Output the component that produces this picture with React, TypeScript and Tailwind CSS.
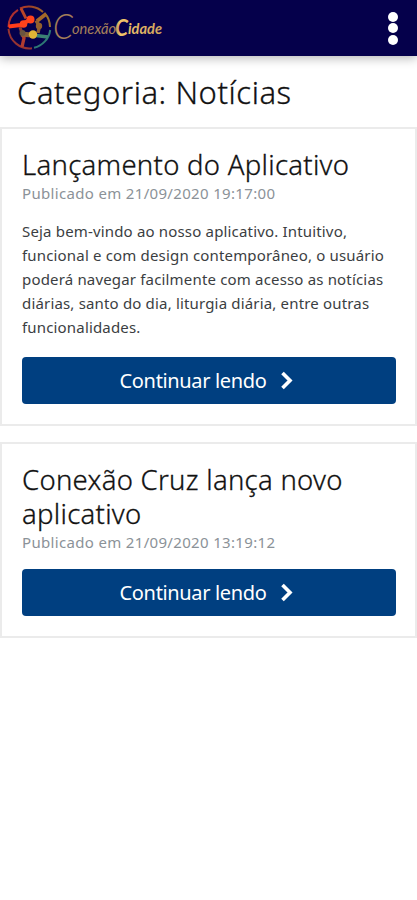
import { useState } from "react";

interface Post {
  id: number;
  title: string;
  publishedAt: string;
  summary?: string[];
}

const posts: Post[] = [
  {
    id: 1,
    title: "Lançamento do Aplicativo",
    publishedAt: "21/09/2020 19:17:00",
    summary: [
      "Seja bem-vindo ao nosso aplicativo. Intuitivo,",
      "funcional e com design contemporâneo, o usuário",
      "poderá navegar facilmente com acesso as notícias",
      "diárias, santo do dia, liturgia diária, entre outras",
      "funcionalidades.",
    ],
  },
  {
    id: 2,
    title: "Conexão Cruz lança novo aplicativo",
    publishedAt: "21/09/2020 13:19:12",
  },
];

function Logo() {
  return (
    <svg width="168" height="56" viewBox="0 0 168 56" fill="none" aria-label="Conexão Cidade">
      <defs>
        <linearGradient id="ring" x1="8" y1="20" x2="51" y2="36" gradientUnits="userSpaceOnUse">
          <stop offset="0" stopColor="#b52b29" />
          <stop offset="0.45" stopColor="#9b4b27" />
          <stop offset="0.8" stopColor="#9a762e" />
          <stop offset="1" stopColor="#2b7873" />
        </linearGradient>
        <linearGradient id="gold" x1="54" y1="0" x2="164" y2="0" gradientUnits="userSpaceOnUse">
          <stop offset="0" stopColor="#a37d58" />
          <stop offset="0.55" stopColor="#a8845a" />
          <stop offset="0.6" stopColor="#f0c56a" />
          <stop offset="1" stopColor="#cfa25c" />
        </linearGradient>
      </defs>

      {/* Wheel */}
      <path d="M8.500 27A21 21 0 0 1 18 9.800" stroke="#ad3030" strokeWidth="2" />
      <path d="M20 8.500A21 21 0 0 1 43 12" stroke="url(#ring)" strokeWidth="2" />
      <path d="M44.500 13A21 21 0 0 1 50 27" stroke="#9a712d" strokeWidth="2" />
      <path d="M50.200 30A21 21 0 0 1 34 47.800" stroke="#2d7875" strokeWidth="2" />
      <path d="M32 48.200A21 21 0 0 1 8.500 29" stroke="#963332" strokeWidth="2" />
      <path d="M21 8.500l5 10" stroke="#b94528" strokeWidth="2.800" />
      <path d="M8.500 26.500l12-1.500 9-5" stroke="#ff3c1a" strokeWidth="4.200" />
      <path d="M46 14l-9 7" stroke="#a66829" strokeWidth="3.800" />
      <path d="M36 20.500l3.500 5.500-1.500 7" stroke="#8f5f30" strokeWidth="3.400" />
      <path d="M48 37l-12-1.500" stroke="#3c8274" strokeWidth="3.400" />
      <path d="M22 47l2-9-2-5" stroke="#b03c30" strokeWidth="3.400" />
      <path d="M21 34l10 1" stroke="#8a6235" strokeWidth="5" />
      <path d="M20 27l1.500 5" stroke="#8c3c32" strokeWidth="3" />
      <circle cx="30.500" cy="19.500" r="4" fill="#ff421c" />
      <circle cx="23.500" cy="24" r="3.800" fill="#ff421c" />
      <circle cx="39" cy="26" r="3.200" fill="#93602d" />
      <circle cx="22.500" cy="33" r="3" fill="#6a5540" />
      <circle cx="33" cy="34.500" r="4.200" fill="#e1b536" />

      {/* Wordmark */}
      <g fill="url(#gold)" fontStyle="italic" fontFamily="Lato, sans-serif">
        <text x="53" y="38.500" fontWeight="300" fontSize="35" textLength="20" lengthAdjust="spacingAndGlyphs">C</text>
        <text x="72" y="34" fontWeight="400" fontSize="15" textLength="44" lengthAdjust="spacingAndGlyphs">onexão</text>
        <text x="115" y="35.500" fontWeight="700" fontSize="22" textLength="13" lengthAdjust="spacingAndGlyphs">C</text>
        <text x="128" y="34" fontWeight="700" fontSize="16" textLength="34" lengthAdjust="spacingAndGlyphs">idade</text>
      </g>
    </svg>
  );
}

function PostCard({ post }: { post: Post }) {
  return (
    <article className="border-2 border-[#ebebeb] bg-white px-5 pt-[19px] pb-5">
      <h2 className="w-[350px] text-[27.5px] leading-[34px] font-light tracking-[0.28px] text-[#111] [-webkit-text-stroke:0.3px_#111]">{post.title}</h2>
      <p className="text-[15px] leading-[22px] tracking-[0.33px] text-[#8b9298]">Publicado em {post.publishedAt}</p>
      {post.summary && (
        <p className="mt-[15px] mb-[18px] text-[15px] leading-[24px] tracking-[0.17px] whitespace-nowrap text-[#3b3e42]">
          {post.summary.map((line) => (
            <span key={line} className="block">{line}</span>
          ))}
        </p>
      )}
      <button className="mt-4 flex h-[47px] w-[374px] items-center justify-center rounded bg-[#003f80] pr-[5px] text-[20px] tracking-[-0.35px] text-white">
        <span>Continuar lendo</span>
        <svg className="ml-[14px]" width="13" height="19" viewBox="0 0 13 19" fill="none">
          <path d="M2.500 2L10 9.500 2.500 17" stroke="currentColor" strokeWidth="3.600" />
        </svg>
      </button>
    </article>
  );
}

export default function App() {
  const [menuOpen, setMenuOpen] = useState(false);

  return (
    <div className="min-h-screen overflow-hidden bg-white font-['Noto_Sans',sans-serif]">
      <header className="flex h-14 items-center justify-between bg-[#05004b] shadow-[0_2px_10px_rgba(0,0,0,0.3)]">
        <Logo />
        <button
          aria-label="Menu"
          aria-expanded={menuOpen}
          onClick={() => setMenuOpen(!menuOpen)}
          className="mr-[19px] flex flex-col gap-[1.5px]"
        >
          <span className="size-[10px] rounded-full bg-white" />
          <span className="size-[10px] rounded-full bg-white" />
          <span className="size-[10px] rounded-full bg-white" />
        </button>
      </header>

      <h1 className="flex h-[71px] items-center pt-0.5 pl-[17px] text-[31px] font-light tracking-[0.57px] text-[#111] [-webkit-text-stroke:0.3px_#111]">Categoria: Notícias</h1>

      <main className="flex flex-col gap-4">
        {posts.map((post) => (
          <PostCard key={post.id} post={post} />
        ))}
      </main>
    </div>
  );
}
